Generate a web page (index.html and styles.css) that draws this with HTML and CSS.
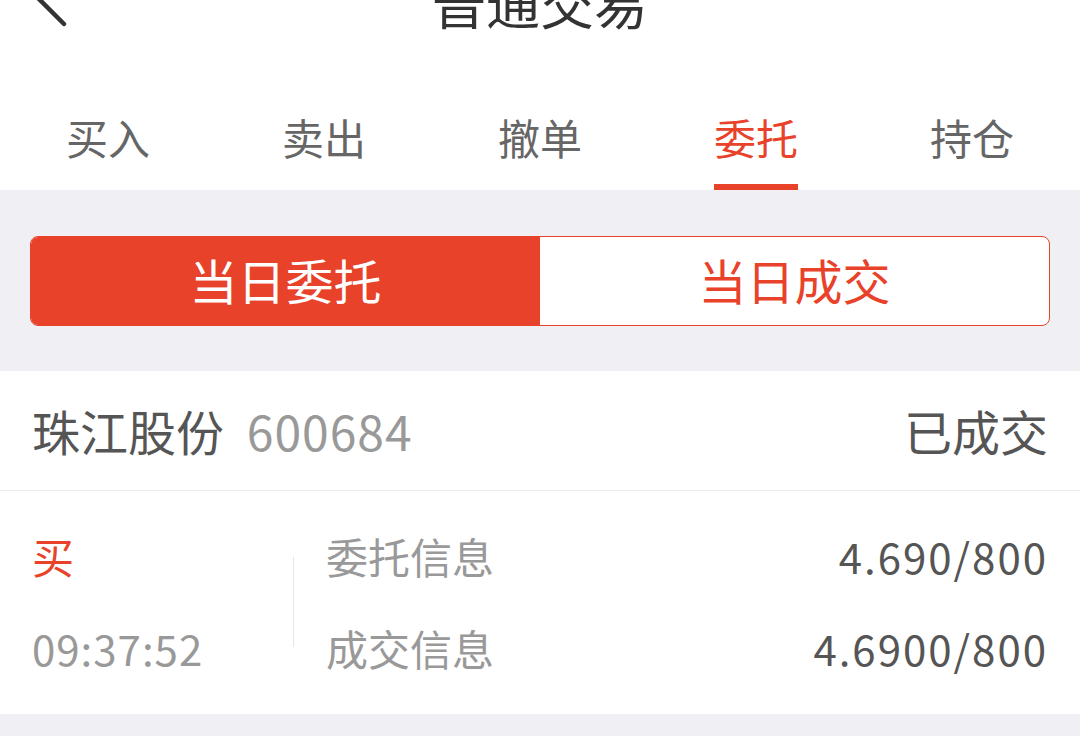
FILE: index.html
```html
<!DOCTYPE html>
<html>
<head>
    <meta charset="utf-8">
    <title>普通交易</title>
    <link rel="stylesheet" href="styles.css">
</head>
<body>
    <div class="header">
        <svg class="back" width="40" height="60" viewBox="0 0 40 60">
            <path d="M30 4 L4 30 L30 56" fill="none" stroke="#333" stroke-width="4.5" stroke-linecap="round" stroke-linejoin="round"/>
        </svg>
        <div class="title">普通交易</div>
    </div>

    <div class="tabs">
        <div class="tab"><span class="tab-text">买入</span></div>
        <div class="tab"><span class="tab-text">卖出</span></div>
        <div class="tab"><span class="tab-text">撤单</span></div>
        <div class="tab active"><span class="tab-text">委托</span></div>
        <div class="tab"><span class="tab-text">持仓</span></div>
    </div>

    <div class="switch-wrap">
        <div class="switch">
            <div class="switch-item on">当日委托</div>
            <div class="switch-item">当日成交</div>
        </div>
    </div>

    <div class="order">
        <div class="order-head">
            <div>
                <span class="stock-name">珠江股份</span>
                <span class="stock-code">600684</span>
            </div>
            <span class="status">已成交</span>
        </div>
        <div class="order-body">
            <div class="side">
                <div class="side-line buy">买</div>
                <div class="side-line time">09:37:52</div>
            </div>
            <div class="vline"></div>
            <div class="info">
                <div class="info-row">
                    <span class="label">委托信息</span>
                    <span class="value">4.690/800</span>
                </div>
                <div class="info-row">
                    <span class="label">成交信息</span>
                    <span class="value">4.6900/800</span>
                </div>
            </div>
        </div>
    </div>
</body>
</html>
```

FILE: styles.css
```css
body {
    margin: 0;
    background: #f0f0f4;
    font-family: "Noto Sans CJK SC", "Noto Sans", sans-serif;
    overflow: hidden;
}
.header {
    position: relative;
    height: 100px;
    margin-top: -52px;
    background: #fff;
    display: flex;
    align-items: center;
    justify-content: center;
}
.back {
    position: absolute;
    left: 34px;
    top: 20px;
}
.title {
    font-size: 54px;
    line-height: 100px;
    color: #333;
    padding-top: 8px;
}
.tabs {
    display: flex;
    height: 142px;
    background: #fff;
}
.tab {
    flex: 1;
    display: flex;
    flex-direction: column;
    align-items: center;
    box-sizing: border-box;
    padding-top: 68px;
}
.tab-text {
    display: inline-block;
    font-size: 42px;
    line-height: 42px;
    color: #666;
    position: relative;
    height: 74px;
}
.tab.active .tab-text {
    color: #e8432a;
}
.tab.active .tab-text::after {
    content: '';
    position: absolute;
    left: 0;
    right: 0;
    bottom: 0;
    height: 6px;
    background: #e8432a;
}
.switch-wrap {
    padding: 46px 30px 45px;
}
.switch {
    display: flex;
    height: 90px;
    border: 1px solid #e8432a;
    border-radius: 8px;
    overflow: hidden;
    background: #fff;
    box-sizing: border-box;
}
.switch-item {
    flex: 1;
    display: flex;
    align-items: center;
    justify-content: center;
    font-size: 48px;
    color: #e8432a;
    padding-bottom: 4px;
}
.switch-item.on {
    background: #e8432a;
    color: #fff;
}
.order {
    background: #fff;
}
.order-head {
    display: flex;
    justify-content: space-between;
    align-items: center;
    height: 120px;
    padding: 0 32px 2px;
    border-bottom: 1px solid #ebebeb;
    box-sizing: border-box;
    font-size: 48px;
}
.stock-name {
    color: #555;
}
.stock-code {
    color: #999;
    margin-left: 12px;
    letter-spacing: 1px;
}
.status {
    color: #555;
}
.order-body {
    display: flex;
    align-items: center;
    padding: 19px 32px 20px;
    font-size: 42px;
}
.side {
    width: 261px;
}
.side-line,
.info-row {
    height: 92px;
    line-height: 92px;
}
.buy {
    color: #e8432a;
}
.time {
    color: #999;
    letter-spacing: 1px;
}
.vline {
    width: 1px;
    height: 90px;
    background: #e6e6e6;
}
.info {
    flex: 1;
    margin-left: 32px;
}
.info-row {
    display: flex;
    justify-content: space-between;
}
.label {
    color: #999;
}
.value {
    color: #555;
    letter-spacing: 2px;
}
```
